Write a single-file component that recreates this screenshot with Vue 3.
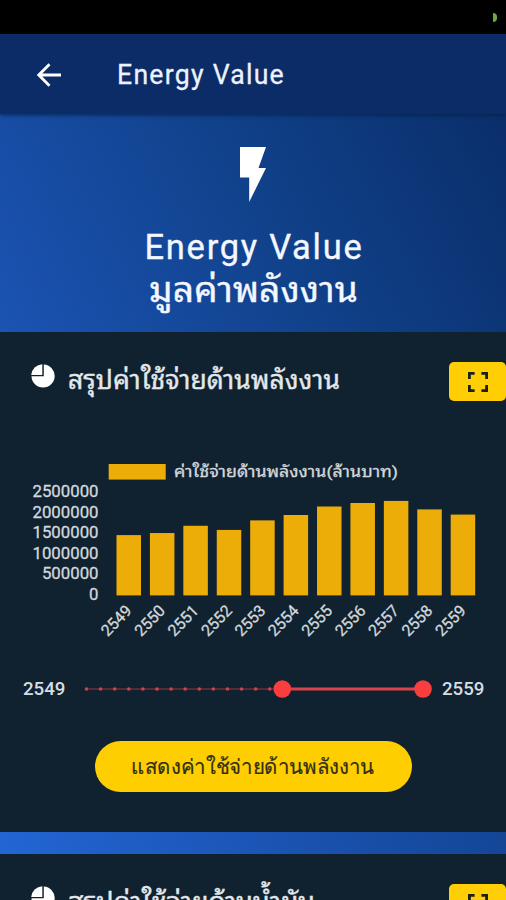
<script setup>
const values = [1455000, 1505000, 1680000, 1580000, 1810000, 1940000, 2145000, 2230000, 2280000, 2075000, 1950000]
const bars = values.map((value, i) => {
  const height = (value / 2500000) * 103.6
  return { year: 2549 + i, x: 116.5 + i * 33.42, y: 595.4 - 450 - height, height }
})
const ticks = [2500000, 2000000, 1500000, 1000000, 500000, 0]
const dots = Array.from({ length: 14 }, (_, i) => 6.5 + i * 14.1)
</script>

<template>
  <div class="screen">
    <div class="status"><i class="indicator"></i></div>
    <header class="appbar">
      <svg class="back" viewBox="0 0 24 24"><path d="M12.5 1.2 1.8 12l10.7 10.8M2 12h22" /></svg>
      <svg class="bar-title" viewBox="0 0 180 40"><text x="0" y="30" textLength="168" lengthAdjust="spacingAndGlyphs">Energy Value</text></svg>
    </header>
    <section class="hero">
      <svg class="bolt" viewBox="0 0 26 55"><path d="M0 0H26L18.5 21H26L9.2 55V30.5H0Z" /></svg>
      <svg class="hero-title" viewBox="0 0 240 110">
        <text class="latin" x="11.5" y="45" textLength="219" lengthAdjust="spacingAndGlyphs">Energy Value</text>
        <text class="thai" x="16" y="88" textLength="209" lengthAdjust="spacingAndGlyphs">มูลค่าพลังงาน</text>
      </svg>
    </section>

    <section class="card">
      <div class="card-head">
        <svg class="pie" viewBox="0 0 24 24"><path d="M12.8 12.3V.4A11.6 11.6 0 1 1 .5 12.3Z" /><path d="M11.3 11H.2A11.6 11.6 0 0 1 11.3 .2Z" /></svg>
        <svg class="card-title" viewBox="0 0 300 60"><text x="1" y="38.5" textLength="272" lengthAdjust="spacingAndGlyphs">สรุปค่าใช้จ่ายด้านพลังงาน</text></svg>
        <button class="expand"><svg viewBox="0 0 20 20"><path d="M1.4 7V1.4H6.6M13.4 1.4h5.2V7M18.6 13v5.6H13.4M6.6 18.6H1.4V13" /></svg></button>
      </div>

      <svg class="chart" viewBox="0 0 506 200">
        <rect x="108.7" y="14" width="57" height="15.6" class="bar" />
        <text x="174" y="26.5" class="legend" textLength="224" lengthAdjust="spacingAndGlyphs">ค่าใช้จ่ายด้านพลังงาน(ล้านบาท)</text>
        <text v-for="(tick, i) in ticks" :key="tick" x="98.5" :y="47 + i * 20.55" class="tick">{{ tick }}</text>
        <g v-for="b in bars" :key="b.year">
          <rect :x="b.x" :y="b.y" width="24.5" :height="b.height" class="bar" />
          <text class="year" :transform="`translate(${b.x + 16.2} 161.5) rotate(-46)`">{{ b.year }}</text>
        </g>
      </svg>

      <div class="range">
        <svg class="year-end" viewBox="0 0 44 24"><text x="1" y="18" textLength="42.5" lengthAdjust="spacingAndGlyphs">2549</text></svg>
        <svg class="track" viewBox="0 0 354 24">
          <path class="rail" d="M5 12H202" />
          <circle v-for="x in dots" :key="x" :cx="x" cy="12" r="1.8" class="dot" />
          <path class="span" d="M202 12H343" />
          <circle cx="202.3" cy="12" r="8.8" class="knob" />
          <circle cx="343" cy="12" r="8.8" class="knob" />
        </svg>
        <svg class="year-end" viewBox="0 0 44 24"><text x="1" y="18" textLength="42.5" lengthAdjust="spacingAndGlyphs">2559</text></svg>
      </div>

      <button class="show">
        <svg viewBox="0 0 260 50"><text x="7" y="32" textLength="243" lengthAdjust="spacingAndGlyphs">แสดงค่าใช้จ่ายด้านพลังงาน</text></svg>
      </button>
    </section>

    <section class="card next">
      <div class="card-head">
        <svg class="pie" viewBox="0 0 24 24"><path d="M12.8 12.3V.4A11.6 11.6 0 1 1 .5 12.3Z" /><path d="M11.3 11H.2A11.6 11.6 0 0 1 11.3 .2Z" /></svg>
        <svg class="card-title" viewBox="0 0 300 60"><text x="1" y="38.5" textLength="247" lengthAdjust="spacingAndGlyphs">สรุปค่าใช้จ่ายด้านน้ำมัน</text></svg>
        <button class="expand"><svg viewBox="0 0 20 20"><path d="M1.4 7V1.4H6.6M13.4 1.4h5.2V7M18.6 13v5.6H13.4M6.6 18.6H1.4V13" /></svg></button>
      </div>
    </section>
  </div>
</template>

<style>
body { margin: 0; overflow: hidden; }
</style>

<style scoped>
.screen {
  width: 506px;
  height: 900px;
  overflow: hidden;
  display: flex;
  flex-direction: column;
  font-family: Roboto, "Noto Sans Thai Looped", Loma, "Noto Sans Thai", "Noto Sans", sans-serif;
  background: linear-gradient(62deg, #2367d8 0%, #1a51ae 35%, #10418a 64%, #0a2d68 96%);
}
svg { display: block; flex: none; }
button { border: 0; padding: 0; display: flex; align-items: center; justify-content: center; }
.status {
  height: 34px;
  flex: none;
  background: #000;
  display: flex;
  justify-content: flex-end;
  align-items: center;
  padding-right: 9px;
  box-sizing: border-box;
}
.indicator { width: 4px; height: 9px; border-radius: 0 4px 4px 0; background: #65ad42; }
.appbar {
  height: 80px;
  flex: none;
  box-sizing: border-box;
  padding: 0 0 0 37px;
  display: flex;
  align-items: center;
  background: #0c2c67;
  box-shadow: 0 1px 4px rgba(3, 28, 66, .8);
  z-index: 1;
}
.back { width: 24px; height: 24px; margin-top: 1px; fill: none; stroke: #fff; stroke-width: 2.8; }
.bar-title { width: 180px; height: 40px; margin-left: 56px; }
.bar-title text { font-size: 27.5px; fill: #edf2ff; letter-spacing: 1.3px; stroke: #edf2ff; stroke-width: .3px; }
.hero {
  height: 218px;
  flex: none;
  display: flex;
  flex-direction: column;
  align-items: center;
  padding-top: 33px;
  box-sizing: border-box;
}
.bolt { width: 26px; height: 55px; fill: #fff; }
.hero-title { width: 240px; height: 110px; margin-top: 12px; }
.hero-title text { fill: #f3f7ff; stroke: #f3f7ff; stroke-width: .35px; }
.latin { font-size: 35.5px; letter-spacing: 1.8px; }
.thai { font-size: 35px; }
.card { height: 500px; flex: none; background: #102230; display: flex; flex-direction: column; }
.card.next { margin-top: 22px; }
.card-head { height: 118px; flex: none; display: flex; align-items: flex-start; padding: 18px 0 0 31px; box-sizing: border-box; }
.pie { width: 24px; height: 24px; margin-top: 14px; fill: #fff; }
.card-title { width: 300px; height: 60px; margin-left: 12px; }
.card-title text { font-size: 27px; fill: #e3e8ec; stroke: #e3e8ec; stroke-width: .4px; }
.expand { width: 57px; height: 39px; margin: 12px 0 0 auto; border-radius: 5px; background: #ffce05; flex: none; }
.expand svg { width: 20px; height: 20px; fill: none; stroke: #1d2016; stroke-width: 2.8; }
.chart { width: 506px; height: 200px; flex: none; }
.bar { fill: #edad08; }
.legend { font-size: 15.5px; fill: #d3d8dc; stroke: #d3d8dc; stroke-width: .3px; }
.tick { font-size: 16.8px; fill: #d3d8dc; stroke: #d3d8dc; stroke-width: .3px; text-anchor: end; }
.year { font-size: 16px; fill: #d3d8dc; stroke: #d3d8dc; stroke-width: .3px; text-anchor: end; }
.range { display: flex; height: 24px; padding: 0 21px 0 22px; margin-top: 27px; flex: none; }
.track { width: 354px; height: 24px; margin-left: 14px; margin-right: 7px; }
.year-end { width: 44px; height: 24px; }
.year-end text { font-size: 17.5px; fill: #d8dde1; font-weight: 500; }
.rail { stroke: #702e39; stroke-width: 1.5; }
.dot { fill: #c84650; }
.span { stroke: #d9434c; stroke-width: 3; }
.knob { fill: #fa3e3d; }
.show { width: 317px; height: 51px; margin: 40px 0 0 95px; border-radius: 26px; background: #ffce00; flex: none; }
.show svg { width: 260px; height: 50px; }
.show text { font-size: 21px; fill: #303018; stroke: #303018; stroke-width: .2px; }
</style>
